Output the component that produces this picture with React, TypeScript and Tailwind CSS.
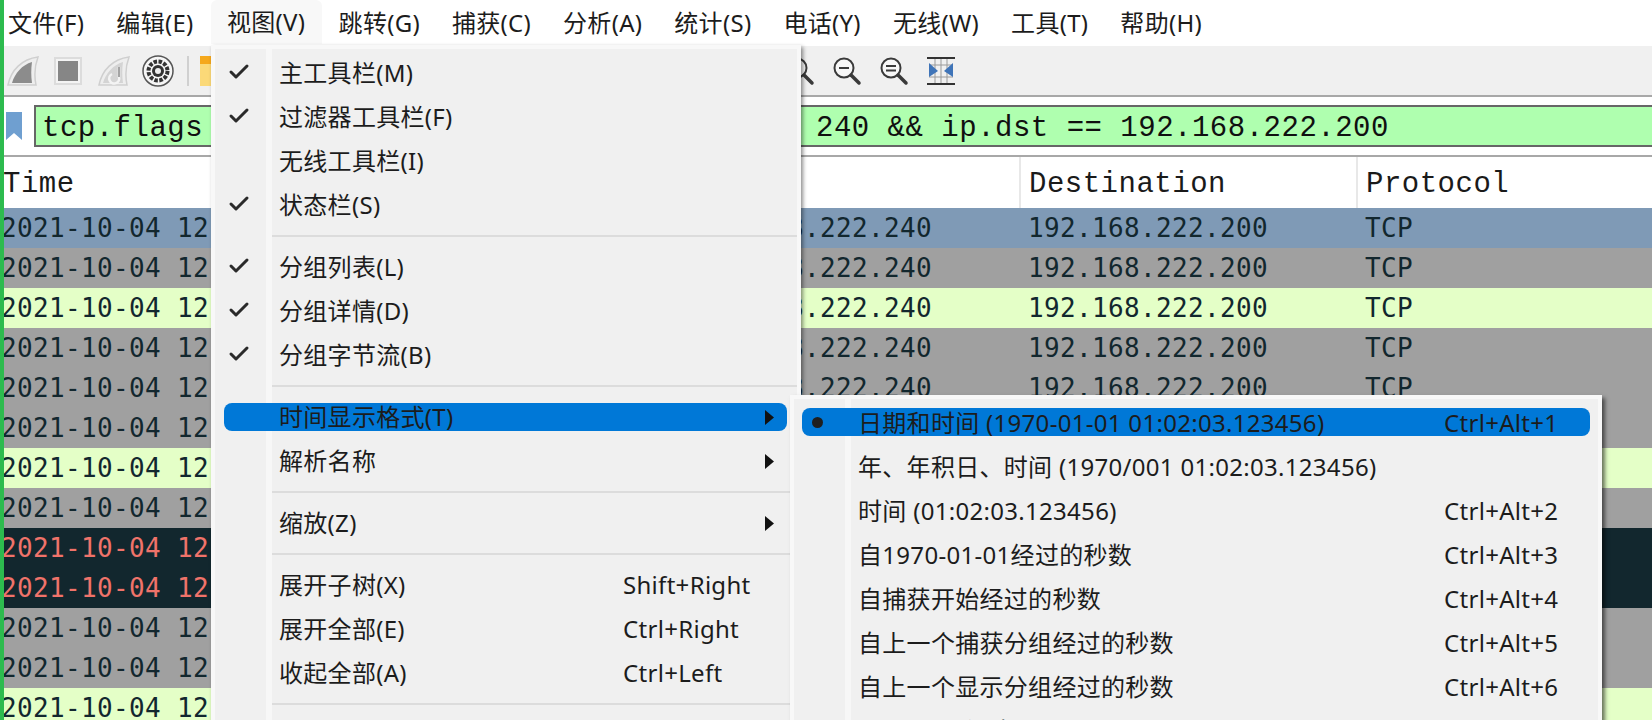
import React from 'react';
import { Check } from 'lucide-react';

const topMenus = ['文件(F)', '编辑(E)', '视图(V)', '跳转(G)', '捕获(C)', '分析(A)', '统计(S)', '电话(Y)', '无线(W)', '工具(T)', '帮助(H)'];

const rows = ['blue', 'gray', 'light', 'gray', 'gray', 'gray', 'light', 'gray', 'dark', 'dark', 'gray', 'gray', 'light'];

const rowClass: Record<string, string> = {
  blue: 'bg-[#7f9ab6] text-[#12272e]',
  gray: 'bg-[#a0a0a0] text-[#12272e]',
  light: 'bg-[#e4ffc7] text-[#12272e]',
  dark: 'bg-[#12272e] text-[#f0736a]',
};

type Item = { label?: string; checked?: boolean; shortcut?: string; arrow?: boolean; active?: boolean; sep?: boolean };

const viewMenu: Item[] = [
  { label: '主工具栏(M)', checked: true },
  { label: '过滤器工具栏(F)', checked: true },
  { label: '无线工具栏(I)' },
  { label: '状态栏(S)', checked: true },
  { sep: true },
  { label: '分组列表(L)', checked: true },
  { label: '分组详情(D)', checked: true },
  { label: '分组字节流(B)', checked: true },
  { sep: true },
  { label: '时间显示格式(T)', arrow: true, active: true },
  { label: '解析名称', arrow: true },
  { sep: true },
  { label: '缩放(Z)', arrow: true },
  { sep: true },
  { label: '展开子树(X)', shortcut: 'Shift+Right' },
  { label: '展开全部(E)', shortcut: 'Ctrl+Right' },
  { label: '收起全部(A)', shortcut: 'Ctrl+Left' },
  { sep: true },
];

const timeMenu = [
  { label: '日期和时间 (1970-01-01 01:02:03.123456)', shortcut: 'Ctrl+Alt+1', active: true },
  { label: '年、年积日、时间 (1970/001 01:02:03.123456)' },
  { label: '时间 (01:02:03.123456)', shortcut: 'Ctrl+Alt+2' },
  { label: '自1970-01-01经过的秒数', shortcut: 'Ctrl+Alt+3' },
  { label: '自捕获开始经过的秒数', shortcut: 'Ctrl+Alt+4' },
  { label: '自上一个捕获分组经过的秒数', shortcut: 'Ctrl+Alt+5' },
  { label: '自上一个显示分组经过的秒数', shortcut: 'Ctrl+Alt+6' },
  { label: 'UTC 日期和时间', shortcut: 'Ctrl+Alt+7' },
];

const Fin = ({ swirl }: { swirl?: boolean }) => (
  <svg width="32" height="32" viewBox="0 0 32 32">
    <path d="M1 30 C4 15 15 4 31 2 C28 10 27 20 29 30 Z" fill="#eeeeee" stroke="#cfcfcf" strokeWidth="1.5" />
    <path d="M5 28 C8 18 15 10 25 7 C24 14 24 21 25 28 Z" fill={swirl ? '#d4d4d4' : '#8c8c8c'} />
    {swirl && <path d="M21 12 L21 22 A5 5 0 1 1 14 19" fill="none" stroke="#f4f4f4" strokeWidth="2.5" />}
    {swirl && <path d="M21 12 L21 22" fill="none" stroke="#8a8a8a" strokeWidth="1.5" />}
  </svg>
);

const Magnifier = ({ mark }: { mark?: 'in' | 'out' | 'same' }) => (
  <svg width="30" height="30" viewBox="0 0 30 30" fill="none" stroke="#3a3a3a">
    <circle cx="12" cy="12" r="9.5" strokeWidth="2" fill="#f7f7f7" />
    <path d="M19 19 L27 27" strokeWidth="3.5" strokeLinecap="round" />
    {mark === 'out' && <path d="M7 12 H17" strokeWidth="2" />}
    {mark === 'same' && <path d="M7 10 H17 M7 14.5 H17" strokeWidth="2" />}
  </svg>
);

const ResizeColumns = () => (
  <svg width="30" height="30" viewBox="0 0 30 30" fill="none">
    <path d="M1 2 H29 M1 28 H29" stroke="#333333" strokeWidth="2" />
    <path d="M9 3 V27 M15 3 V27 M21 3 V27 M3 9 H27 M3 21 H27" stroke="#9a9a9a" strokeWidth="1" />
    <path d="M3 7 L12 15 L3 21 Z M27 7 L18 15 L27 21 Z" fill="#3f74b8" />
  </svg>
);

const SubArrow = () => (
  <svg width="9" height="15" viewBox="0 0 9 15" className="shrink-0">
    <path d="M0 0 L9 7.5 L0 15 Z" fill="#111111" />
  </svg>
);

export default function App() {
  return (
    <div className="relative flex h-[720px] w-[1652px] overflow-hidden bg-white font-['Noto_Sans','Noto_Sans_CJK_SC',sans-serif] text-[24px] tracking-[0.3px] text-[#1c1c1c]">
      <div className="relative z-10 w-[4px] shrink-0 bg-[#2dbb4e]" />

      <div className="flex min-w-0 flex-1 flex-col">
        {/* Menu bar */}
        <div className="flex h-[46px] shrink-0 items-center gap-[32px] bg-white pl-[4px]">
          {topMenus.map((m) => (
            <span key={m} className={m === '视图(V)' ? 'mb-[2px] -mx-[15px] flex h-[44px] w-[111px] items-center justify-center rounded-t-md bg-[#f8f8f8]' : 'whitespace-nowrap'}>
              {m}
            </span>
          ))}
        </div>

        {/* Toolbar */}
        <div className="flex h-[51px] shrink-0 items-center border-b-2 border-[#a8a8a8] bg-[#f0f0f0] pl-[3px]">
          <Fin />
          <div className="ml-[15px] flex h-[28px] w-[28px] items-center justify-center border-2 border-[#dcdcdc] bg-[#f4f4f4]">
            <div className="h-[20px] w-[20px] bg-[#868686]" />
          </div>
          <div className="ml-[16px]"><Fin swirl /></div>
          <svg width="32" height="32" viewBox="0 0 32 32" className="ml-[12px]">
            <circle cx="16" cy="16" r="15" fill="#f6f6f6" stroke="#555555" strokeWidth="1.5" />
            <circle cx="16" cy="16" r="9.5" fill="none" stroke="#333333" strokeWidth="4" strokeDasharray="3.5 1.5" />
            <circle cx="16" cy="16" r="6" fill="#333333" />
            <circle cx="16" cy="16" r="3" fill="#eeeeee" />
          </svg>
          <div className="ml-[13px] h-[30px] w-[2px] bg-[#d0d0d0]" />
          <div className="ml-[11px] flex h-[30px] w-[24px] flex-col rounded-sm">
            <div className="h-[8px] bg-[#f5a81c]" />
            <div className="flex-1 bg-[#fbd978]" />
          </div>
          <div className="ml-[561px] flex items-center gap-[17px]">
            <Magnifier mark="in" />
            <Magnifier mark="out" />
            <Magnifier mark="same" />
            <ResizeColumns />
          </div>
        </div>

        {/* Filter bar */}
        <div className="flex h-[50px] shrink-0 items-end bg-white">
          <div className="flex h-[42px] w-[30px] shrink-0 items-center pl-[2px]">
            <svg width="16" height="28" viewBox="0 0 16 28"><path d="M0 0 H16 V28 L8 21 L0 28 Z" fill="#6f9fd0" /></svg>
          </div>
          <div className="relative h-[42px] flex-1 border-y-2 border-l-2 border-[#666666] bg-[#afffaf] font-['Liberation_Mono',monospace] text-[29px] leading-[44px] tracking-[0.5px] text-[#101010]">
            <span className="absolute left-[6px]">tcp.flags</span>
            <span className="absolute left-[780px]">240 &amp;&amp; ip.dst == 192.168.222.200</span>
          </div>
        </div>

        {/* Packet list */}
        <div className="mt-[8px] flex h-[53px] shrink-0 items-center border-t-2 border-[#a8a8a8] bg-white font-['Liberation_Mono',monospace] text-[29px] tracking-[0.5px] text-[#1a1a1a]">
          <div className="-ml-[1px] h-[51px] w-[1018px] shrink-0 border-r-2 border-[#e8e8e8] pt-[4px] leading-[48px]">Time</div>
          <div className="h-[51px] w-[337px] shrink-0 border-r-2 border-[#e8e8e8] pl-[8px] pt-[4px] leading-[48px]">Destination</div>
          <div className="h-[51px] pl-[8px] pt-[4px] leading-[48px]">Protocol</div>
        </div>
        <div className="flex flex-col font-['DejaVu_Sans_Mono',monospace] text-[26px] tracking-[0.35px]">
          {rows.map((r, i) => (
            <div key={i} className={`flex h-[40px] shrink-0 items-center leading-[40px] ${rowClass[r]}`}>
              <div className="-ml-[3px] w-[691px] shrink-0">2021-10-04 12</div>
              <div className="w-[336px] shrink-0">192.168.222.240</div>
              <div className="w-[337px] shrink-0">192.168.222.200</div>
              <div>TCP</div>
            </div>
          ))}
        </div>
      </div>

      {/* View menu */}
      <div className="absolute left-[211px] top-[45px] z-20 h-[720px] w-[590px] border-[4px] border-[#f8f8f8] bg-[#f0f0f0] pt-[2px] shadow-[2px_2px_4px_rgba(0,0,0,0.45)]">
        <div className="absolute bottom-0 left-[51px] top-0 w-[6px] bg-[#f7f7f7]" />
        {viewMenu.map((item, i) =>
          item.sep ? (
            <div key={i} className="relative ml-[57px] h-[18px] pt-[8px]">
              <div className="h-[2px] bg-[#dcdcdc]" />
            </div>
          ) : (
            <div key={i} className="relative h-[44px] py-[8px] pl-[9px] pr-[10px]">
              <div className={`flex h-[28px] items-center rounded-lg pr-[13px] ${item.active ? 'bg-[#0078d7]' : ''}`}>
                <div className="mb-[2px] w-[55px] shrink-0 pl-[3px]">
                  {item.checked && <Check size={24} strokeWidth={3} className="text-[#2a2a2a]" />}
                </div>
                <span className="flex-1 whitespace-nowrap">{item.label}</span>
                {item.shortcut && <span className="w-[151px] shrink-0 whitespace-nowrap">{item.shortcut}</span>}
                {item.arrow && <SubArrow />}
              </div>
            </div>
          ),
        )}
      </div>

      {/* Time display format submenu */}
      <div className="absolute left-[790px] top-[395px] z-30 h-[400px] w-[812px] border-[4px] border-[#f8f8f8] bg-[#f0f0f0] pt-[1px] shadow-[3px_3px_4px_rgba(0,0,0,0.55)]">
        <div className="absolute bottom-0 left-[51px] top-0 w-[6px] bg-[#f7f7f7]" />
        {timeMenu.map((item) => (
          <div key={item.label} className="relative h-[44px] p-[8px]">
            <div className={`flex h-[28px] items-center rounded-lg ${item.active ? 'bg-[#0078d7]' : ''}`}>
              <div className="flex w-[56px] shrink-0 pl-[10px]">
                {item.active && <div className="h-[11px] w-[11px] rounded-full bg-[#1f1f1f]" />}
              </div>
              <span className="flex-1 whitespace-nowrap pt-[2px]">{item.label}</span>
              {item.shortcut && <span className="w-[146px] shrink-0 whitespace-nowrap pt-[2px]">{item.shortcut}</span>}
            </div>
          </div>
        ))}
      </div>
    </div>
  );
}
